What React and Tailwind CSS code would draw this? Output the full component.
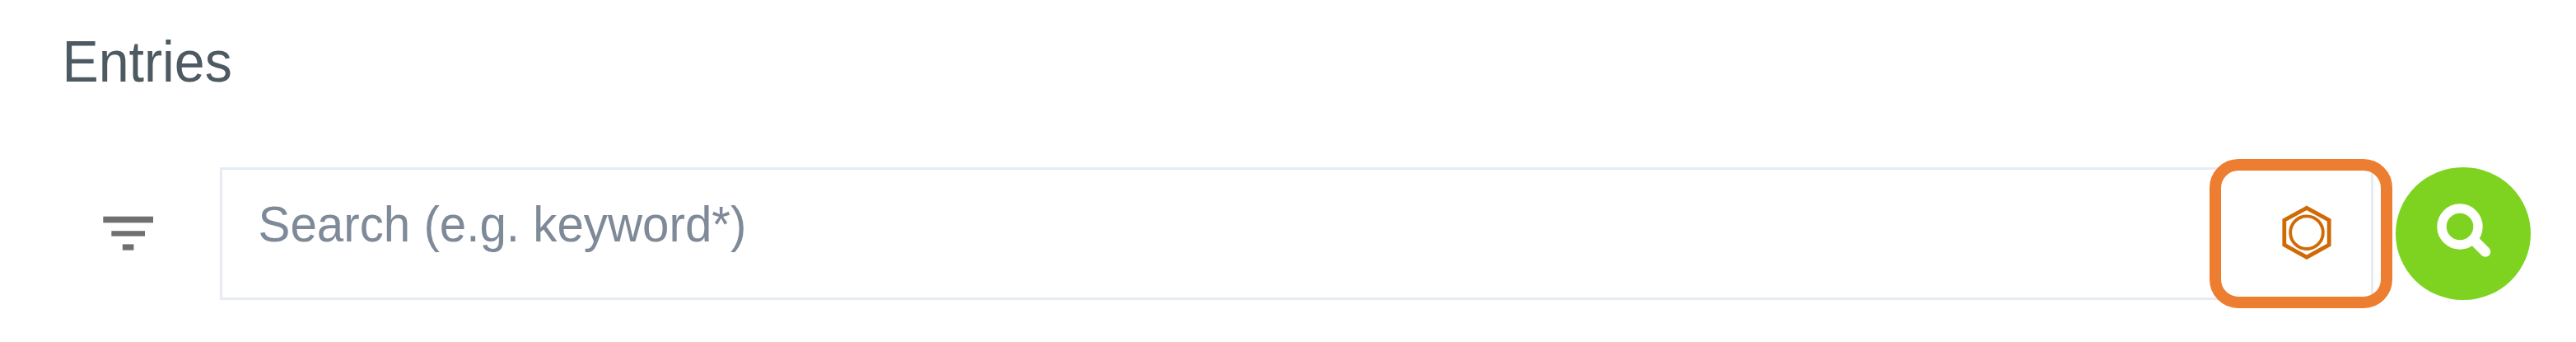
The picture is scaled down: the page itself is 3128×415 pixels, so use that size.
function FilterIcon() {
  return (
    <svg viewBox="0 0 62 42" className="h-[42px] w-[62px]" fill="#6f6f6f">
      <rect x="0.3" y="0.7" width="60.7" height="7.6" />
      <rect x="10.3" y="18.2" width="40.7" height="6.4" />
      <rect x="23.8" y="34.4" width="13.6" height="7.2" />
    </svg>
  );
}

function BenzeneIcon() {
  return (
    <svg
      viewBox="0 0 62 66"
      className="h-[66px] w-[62px]"
      fill="none"
      stroke="#d06a05"
    >
      <path d="M31 3.3 58.2 18.2V48.2L31 63.2 3.8 48.2V18.2Z" strokeWidth="4.8" />
      <circle cx="31" cy="33.2" r="19.8" strokeWidth="3.8" />
    </svg>
  );
}

function SearchIcon() {
  return (
    <svg
      viewBox="0 0 68 68"
      className="h-[68px] w-[68px]"
      fill="none"
      stroke="#fff"
    >
      <circle cx="29" cy="29" r="22" strokeWidth="11.4" />
      <path d="M47 46.5 60 59.5" strokeWidth="12.5" strokeLinecap="round" />
    </svg>
  );
}

function SearchBar() {
  return (
    <form
      className="flex items-start"
      onSubmit={(event) => event.preventDefault()}
    >
      <button
        type="button"
        aria-label="Filter"
        className="mt-[69px] ml-[125px] h-[42px] w-[62px]"
      >
        <FilterIcon />
      </button>

      <div className="mt-[10px] ml-[80px] flex h-[161px] w-[2615px] border-[3px] border-[#e6ecf2]">
        <input
          type="text"
          aria-label="Search"
          placeholder="Search (e.g. keyword*)"
          className="h-[130px] min-w-0 flex-1 scale-y-[1.06] bg-transparent pl-[43.5px] text-[58.3px] text-[#7f8a99] outline-none placeholder:text-[#7f8a99]"
        />
      </div>

      <button
        type="button"
        aria-label="Structure search"
        className="z-10 -ml-[199px] flex h-[181px] w-[222px] items-start rounded-[35px] border-[14px] border-[#ed7d31] pt-[41.5px] pl-[73px]"
      >
        <BenzeneIcon />
      </button>

      <button
        type="submit"
        aria-label="Submit search"
        className="mt-[9.5px] ml-[4px] flex h-[161.5px] w-[163.5px] items-start rounded-[50%] bg-[#7ed321] pt-[43.5px] pl-[48.5px]"
      >
        <SearchIcon />
      </button>
    </form>
  );
}

export default function App() {
  return (
    <main className="h-[415px] w-[3128px] overflow-hidden bg-white font-['Liberation_Sans',Arial,sans-serif]">
      <header className="h-[193px] pt-[34px] pl-[75.5px]">
        <h1 className="scale-y-[1.075] text-[66.3px] leading-[80px] text-[#4d5a61]">
          Entries
        </h1>
      </header>
      <SearchBar />
    </main>
  );
}
